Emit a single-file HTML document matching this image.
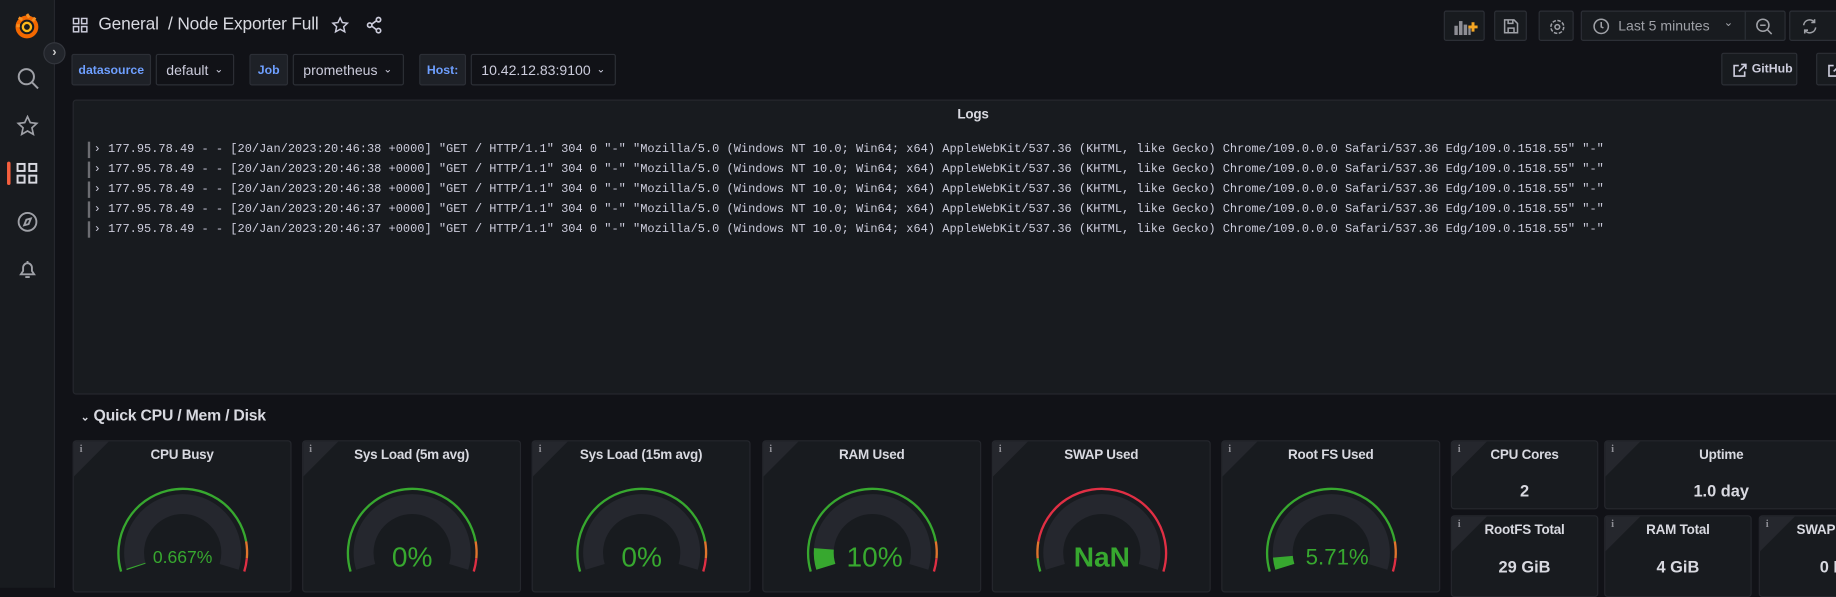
<!DOCTYPE html>
<html><head><meta charset="utf-8"><style>
*{box-sizing:border-box;margin:0;padding:0}
html,body{width:1836px;height:587px;overflow:hidden;background:#111217}
#w{position:absolute;left:0;top:0;width:1568px;height:502px;transform:scale(1.17092);transform-origin:0 0;font-family:"Liberation Sans",sans-serif;color:#ccccdc}
.a{position:absolute}
.side{left:0;top:0;width:47px;height:502px;background:#181b1f;border-right:1px solid #25272d}
.btn{position:absolute;background:#181b1f;border:1px solid #2c2f36;border-radius:2px}
.lbl{position:absolute;background:#1e2127;border:1px solid #2c2f36;border-radius:2px;color:#6e9fff;font-size:10.5px;font-weight:bold;display:flex;align-items:center;justify-content:center;height:27px;top:46px}
.dd{position:absolute;background:#111217;border:1px solid #2c2f36;border-radius:2px;color:#ccccdc;font-size:12px;display:flex;align-items:center;padding-left:8px;height:27px;top:46px}
.panel{position:absolute;background:#181b1f;border:1px solid #25272d;border-radius:3px;overflow:hidden}
.ttl{position:absolute;left:0;right:0;top:6px;text-align:center;font-size:11.5px;font-weight:bold;color:#d8d9e0;letter-spacing:-0.2px}
.info{position:absolute;left:0;top:0;width:0;height:0;border-top:30px solid #25272d;border-right:30px solid transparent}
.info:after{content:"i";position:absolute;left:5px;top:-29px;font-size:9px;font-weight:bold;color:#8e8e95;font-family:"Liberation Serif",serif}
.log{position:absolute;left:12px;font-family:"Liberation Mono",monospace;font-size:10.24px;color:#ccccdc;white-space:pre;height:14px;line-height:14px;border-left:2px solid #6c6d72;padding-left:3px}
.sv{position:absolute;left:0;right:0;text-align:center;font-size:14px;font-weight:bold;color:#d8d9e0}
</style></head><body><div id="w">
<div class="a side"></div>
<svg class="a" style="left:12px;top:11px" width="22" height="23" viewBox="0 0 22 23"><circle cx="11" cy="12" r="8" fill="none" stroke="#f46800" stroke-width="3.5"/><circle cx="11" cy="12" r="3.5" fill="none" stroke="#fbb81a" stroke-width="2"/><path d="M11 1l2 3M4 4l3 2M2 11h3M18 4l-2 3" stroke="#f69023" stroke-width="2.5"/></svg>
<div class="a" style="left:37px;top:36px;width:19px;height:19px;border-radius:50%;background:#22252b;border:1px solid #34373e;color:#ccc;font-size:11px;text-align:center;line-height:16px;font-weight:bold">›</div>
<svg class="a" style="left:14px;top:57px" width="20" height="20" viewBox="0 0 20 20" fill="none" stroke="#9fa1a7" stroke-width="1.7"><circle cx="8.5" cy="8.5" r="6.5"/><path d="M13.5 13.5l5 5"/></svg>
<svg class="a" style="left:14px;top:98px" width="19" height="19" viewBox="0 0 24 24" fill="none" stroke="#9fa1a7" stroke-width="1.8"><path d="M12 2l3 6.5 7 .8-5.2 4.8 1.5 7L12 17.5 5.7 21.1l1.5-7L2 9.3l7-.8z"/></svg>
<div class="a" style="left:6px;top:138px;width:3px;height:20px;background:#f55f3e;border-radius:2px"></div>
<svg class="a" style="left:14px;top:139px" width="18" height="18" viewBox="0 0 18 18" fill="none" stroke="#d8d9e0" stroke-width="1.7"><rect x="1" y="1" width="6" height="6"/><rect x="11" y="1" width="6" height="6"/><rect x="1" y="11" width="6" height="6"/><rect x="11" y="11" width="6" height="6"/></svg>
<svg class="a" style="left:14px;top:180px" width="19" height="19" viewBox="0 0 20 20" fill="none" stroke="#9fa1a7" stroke-width="1.7"><circle cx="10" cy="10" r="8"/><path d="M13 7l-2 5-4 1 2-5z"/></svg>
<svg class="a" style="left:15px;top:221px" width="17" height="18" viewBox="0 0 18 19" fill="none" stroke="#9fa1a7" stroke-width="1.7"><path d="M3 14h12l-2-3V8a4 4 0 0 0-8 0v3z M7 16.5h4 M9 2v2"/></svg>
<svg class="a" style="left:62px;top:15px" width="13" height="13" viewBox="0 0 13 13" fill="none" stroke="#ccccdc" stroke-width="1.3"><rect x=".7" y=".7" width="4.5" height="4.5"/><rect x="7.7" y=".7" width="4.5" height="4.5"/><rect x=".7" y="7.7" width="4.5" height="4.5"/><rect x="7.7" y="7.7" width="4.5" height="4.5"/></svg>
<div class="a" style="left:84px;top:13px;font-size:14.8px;letter-spacing:-0.15px;color:#d8d9e0;white-space:nowrap">General &nbsp;/ Node Exporter Full</div>
<svg class="a" style="left:283px;top:14px" width="15" height="15" viewBox="0 0 24 24" fill="none" stroke="#ccccdc" stroke-width="2"><path d="M12 2l3 6.5 7 .8-5.2 4.8 1.5 7L12 17.5 5.7 21.1l1.5-7L2 9.3l7-.8z"/></svg>
<svg class="a" style="left:312px;top:14px" width="15" height="15" viewBox="0 0 16 16" fill="none" stroke="#ccccdc" stroke-width="1.5"><circle cx="12" cy="3" r="2"/><circle cx="4" cy="8" r="2"/><circle cx="12" cy="13" r="2"/><path d="M6 7l4-3M6 9l4 3"/></svg>
<div class="btn" style="left:1233px;top:9px;width:35px;height:26px"><svg style="position:absolute;left:8px;top:6px" width="20" height="14" viewBox="0 0 20 14"><rect x="0" y="6" width="3" height="8" fill="#8e8e95"/><rect x="4" y="2" width="3" height="12" fill="#8e8e95"/><rect x="8" y="5" width="3" height="9" fill="#8e8e95"/><rect x="12" y="8" width="2" height="6" fill="#8e8e95"/><path d="M16 3v8M12 7h8" stroke="#f5a623" stroke-width="2.5"/></svg></div>
<div class="btn" style="left:1276px;top:9px;width:28px;height:26px"><svg style="position:absolute;left:7px;top:6px" width="13" height="13" viewBox="0 0 13 13" fill="none" stroke="#9fa1a7" stroke-width="1.3"><path d="M1 1h8l3 3v8H1z M4 1v3h4V1 M4 12V8h5v4"/></svg></div>
<div class="btn" style="left:1314px;top:9px;width:30px;height:26px"><svg style="position:absolute;left:8px;top:6px" width="14" height="14" viewBox="0 0 14 14" fill="none" stroke="#9fa1a7" stroke-width="1.3"><circle cx="7" cy="7" r="2"/><circle cx="7" cy="7" r="5.5" stroke-dasharray="3 1.3"/></svg></div>
<div class="btn" style="left:1350px;top:9px;width:175px;height:26px"><svg style="position:absolute;left:9px;top:5px" width="15" height="15" viewBox="0 0 16 16" fill="none" stroke="#9fa1a7" stroke-width="1.4"><circle cx="8" cy="8" r="6.5"/><path d="M8 4v4.5l2 1"/></svg><span style="position:absolute;left:31px;top:5px;font-size:12px;color:#9fa1a7">Last 5 minutes</span><span style="position:absolute;left:121px;top:4px;font-size:10px;color:#9fa1a7">⌄</span><div style="position:absolute;left:139px;top:0;width:1px;height:24px;background:#2c2f36"></div><svg style="position:absolute;left:148px;top:5px" width="15" height="15" viewBox="0 0 16 16" fill="none" stroke="#9fa1a7" stroke-width="1.4"><circle cx="7" cy="7" r="5.5"/><path d="M4.5 7h5M11 11l4 4"/></svg></div>
<div class="btn" style="left:1528px;top:9px;width:45px;height:26px"><svg style="position:absolute;left:9px;top:5px" width="15" height="15" viewBox="0 0 16 16" fill="none" stroke="#9fa1a7" stroke-width="1.4"><path d="M2.5 7a5.5 5.5 0 0 1 10-2.5M13.5 9a5.5 5.5 0 0 1-10 2.5M12.5 1.5v3h-3M3.5 14.5v-3h3"/></svg></div>
<div class="lbl" style="left:61px;width:68px">datasource</div>
<div class="dd" style="left:133px;width:67px">default <span style="margin-left:5px;font-size:9px">⌄</span></div>
<div class="lbl" style="left:213px;width:33px">Job</div>
<div class="dd" style="left:250px;width:95px">prometheus <span style="margin-left:5px;font-size:9px">⌄</span></div>
<div class="lbl" style="left:358px;width:40px">Host:</div>
<div class="dd" style="left:402px;width:124px">10.42.12.83:9100 <span style="margin-left:5px;font-size:9px">⌄</span></div>
<div class="btn" style="left:1470px;top:45px;width:65px;height:28px"><svg style="position:absolute;left:9px;top:8px" width="12" height="12" viewBox="0 0 12 12" fill="none" stroke="#ccccdc" stroke-width="1.4"><path d="M5 2H1v9h9V7M7 1h4v4M11 1L5 7"/></svg><span style="position:absolute;left:25px;top:7px;font-size:10.5px;font-weight:bold;color:#ccccdc">GitHub</span></div>
<div class="btn" style="left:1551px;top:45px;width:40px;height:28px"><svg style="position:absolute;left:9px;top:8px" width="12" height="12" viewBox="0 0 12 12" fill="none" stroke="#ccccdc" stroke-width="1.4"><path d="M5 2H1v9h9V7M7 1h4v4M11 1L5 7"/></svg></div>
<div class="panel" style="left:62px;top:85px;width:1520px;height:252px">
<div class="ttl" style="left:0;width:1536px">Logs</div>
<div class="log" style="top:35px">› 177.95.78.49 - - [20/Jan/2023:20:46:38 +0000] "GET / HTTP/1.1" 304 0 "-" "Mozilla/5.0 (Windows NT 10.0; Win64; x64) AppleWebKit/537.36 (KHTML, like Gecko) Chrome/109.0.0.0 Safari/537.36 Edg/109.0.1518.55" "-"</div>
<div class="log" style="top:52px">› 177.95.78.49 - - [20/Jan/2023:20:46:38 +0000] "GET / HTTP/1.1" 304 0 "-" "Mozilla/5.0 (Windows NT 10.0; Win64; x64) AppleWebKit/537.36 (KHTML, like Gecko) Chrome/109.0.0.0 Safari/537.36 Edg/109.0.1518.55" "-"</div>
<div class="log" style="top:69px">› 177.95.78.49 - - [20/Jan/2023:20:46:38 +0000] "GET / HTTP/1.1" 304 0 "-" "Mozilla/5.0 (Windows NT 10.0; Win64; x64) AppleWebKit/537.36 (KHTML, like Gecko) Chrome/109.0.0.0 Safari/537.36 Edg/109.0.1518.55" "-"</div>
<div class="log" style="top:86px">› 177.95.78.49 - - [20/Jan/2023:20:46:37 +0000] "GET / HTTP/1.1" 304 0 "-" "Mozilla/5.0 (Windows NT 10.0; Win64; x64) AppleWebKit/537.36 (KHTML, like Gecko) Chrome/109.0.0.0 Safari/537.36 Edg/109.0.1518.55" "-"</div>
<div class="log" style="top:103px">› 177.95.78.49 - - [20/Jan/2023:20:46:37 +0000] "GET / HTTP/1.1" 304 0 "-" "Mozilla/5.0 (Windows NT 10.0; Win64; x64) AppleWebKit/537.36 (KHTML, like Gecko) Chrome/109.0.0.0 Safari/537.36 Edg/109.0.1518.55" "-"</div>
</div>
<div class="a" style="left:69px;top:347px;font-size:13.5px;font-weight:bold;letter-spacing:-0.2px;color:#d8d9e0;white-space:nowrap"><span style="font-size:9px">⌄</span> Quick CPU / Mem / Disk</div>
<div class="panel" style="left:62px;top:376px;width:187px;height:130px"><div class="info"></div><div class="ttl">CPU Busy</div>
<svg class="a" style="left:0;top:0" width="187" height="130" viewBox="0 0 187 130" fill="none">
<path d="M53.3 107.1 A41.5 41.5 0 1 1 132.7 107.1" stroke="#25272e" stroke-width="17"/>
<path d="M53.3 107.1 A41.5 41.5 0 0 1 53 106.2" stroke="#37a82f" stroke-width="17"/>
<path d="M40.4 111.1 A55 55 0 1 1 147.2 85.4" stroke="#37a82f" stroke-width="2"/><path d="M147.2 85.4 A55 55 0 0 1 147.8 99.8" stroke="#e0752d" stroke-width="2"/><path d="M147.8 99.8 A55 55 0 0 1 145.6 111.1" stroke="#e02f44" stroke-width="2"/>
<text x="93" y="104" text-anchor="middle" fill="#37a82f" font-size="15" font-family="Liberation Sans">0.667%</text></svg></div>
<div class="panel" style="left:258px;top:376px;width:187px;height:130px"><div class="info"></div><div class="ttl">Sys Load (5m avg)</div>
<svg class="a" style="left:0;top:0" width="187" height="130" viewBox="0 0 187 130" fill="none">
<path d="M53.3 107.1 A41.5 41.5 0 1 1 132.7 107.1" stroke="#25272e" stroke-width="17"/>
<path d="M40.4 111.1 A55 55 0 1 1 147.2 85.4" stroke="#37a82f" stroke-width="2"/><path d="M147.2 85.4 A55 55 0 0 1 147.8 99.8" stroke="#e0752d" stroke-width="2"/><path d="M147.8 99.8 A55 55 0 0 1 145.6 111.1" stroke="#e02f44" stroke-width="2"/>
<text x="93" y="107" text-anchor="middle" fill="#37a82f" font-size="24" font-family="Liberation Sans">0%</text></svg></div>
<div class="panel" style="left:454px;top:376px;width:187px;height:130px"><div class="info"></div><div class="ttl">Sys Load (15m avg)</div>
<svg class="a" style="left:0;top:0" width="187" height="130" viewBox="0 0 187 130" fill="none">
<path d="M53.3 107.1 A41.5 41.5 0 1 1 132.7 107.1" stroke="#25272e" stroke-width="17"/>
<path d="M40.4 111.1 A55 55 0 1 1 147.2 85.4" stroke="#37a82f" stroke-width="2"/><path d="M147.2 85.4 A55 55 0 0 1 147.8 99.8" stroke="#e0752d" stroke-width="2"/><path d="M147.8 99.8 A55 55 0 0 1 145.6 111.1" stroke="#e02f44" stroke-width="2"/>
<text x="93" y="107" text-anchor="middle" fill="#37a82f" font-size="24" font-family="Liberation Sans">0%</text></svg></div>
<div class="panel" style="left:651px;top:376px;width:187px;height:130px"><div class="info"></div><div class="ttl">RAM Used</div>
<svg class="a" style="left:0;top:0" width="187" height="130" viewBox="0 0 187 130" fill="none">
<path d="M53.3 107.1 A41.5 41.5 0 1 1 132.7 107.1" stroke="#25272e" stroke-width="17"/>
<path d="M53.3 107.1 A41.5 41.5 0 0 1 51.6 91.8" stroke="#37a82f" stroke-width="17"/>
<path d="M40.4 111.1 A55 55 0 1 1 147.2 85.4" stroke="#37a82f" stroke-width="2"/><path d="M147.2 85.4 A55 55 0 0 1 147.8 99.8" stroke="#e0752d" stroke-width="2"/><path d="M147.8 99.8 A55 55 0 0 1 145.6 111.1" stroke="#e02f44" stroke-width="2"/>
<text x="95" y="107" text-anchor="middle" fill="#37a82f" font-size="24" font-family="Liberation Sans">10%</text></svg></div>
<div class="panel" style="left:847px;top:376px;width:187px;height:130px"><div class="info"></div><div class="ttl">SWAP Used</div>
<svg class="a" style="left:0;top:0" width="187" height="130" viewBox="0 0 187 130" fill="none">
<path d="M53.3 107.1 A41.5 41.5 0 1 1 132.7 107.1" stroke="#25272e" stroke-width="17"/>
<path d="M40.4 111.1 A55 55 0 0 1 38.2 99.8" stroke="#37a82f" stroke-width="2"/><path d="M38.2 99.8 A55 55 0 0 1 38.8 85.4" stroke="#e0752d" stroke-width="2"/><path d="M38.8 85.4 A55 55 0 1 1 145.6 111.1" stroke="#e02f44" stroke-width="2"/>
<text x="93" y="107" text-anchor="middle" fill="#37a82f" font-size="24" font-weight="bold" font-family="Liberation Sans">NaN</text></svg></div>
<div class="panel" style="left:1043px;top:376px;width:187px;height:130px"><div class="info"></div><div class="ttl">Root FS Used</div>
<svg class="a" style="left:0;top:0" width="187" height="130" viewBox="0 0 187 130" fill="none">
<path d="M53.3 107.1 A41.5 41.5 0 1 1 132.7 107.1" stroke="#25272e" stroke-width="17"/>
<path d="M53.3 107.1 A41.5 41.5 0 0 1 51.6 98.5" stroke="#37a82f" stroke-width="17"/>
<path d="M40.4 111.1 A55 55 0 1 1 147.2 85.4" stroke="#37a82f" stroke-width="2"/><path d="M147.2 85.4 A55 55 0 0 1 147.8 99.8" stroke="#e0752d" stroke-width="2"/><path d="M147.8 99.8 A55 55 0 0 1 145.6 111.1" stroke="#e02f44" stroke-width="2"/>
<text x="98" y="105" text-anchor="middle" fill="#37a82f" font-size="19" font-family="Liberation Sans">5.71%</text></svg></div>
<div class="panel" style="left:1239px;top:376px;width:126px;height:59px"><div class="info"></div><div class="ttl">CPU Cores</div><div class="sv" style="top:34px">2</div></div>
<div class="panel" style="left:1370px;top:376px;width:220px;height:59px"><div class="info"></div><div class="ttl" style="width:198px">Uptime</div><div class="sv" style="top:34px;width:198px">1.0 day</div></div>
<div class="panel" style="left:1239px;top:440px;width:126px;height:70px"><div class="info"></div><div class="ttl">RootFS Total</div><div class="sv" style="top:35px">29 GiB</div></div>
<div class="panel" style="left:1370px;top:440px;width:126px;height:70px"><div class="info"></div><div class="ttl">RAM Total</div><div class="sv" style="top:35px">4 GiB</div></div>
<div class="panel" style="left:1502px;top:440px;width:126px;height:70px"><div class="info"></div><div class="ttl">SWAP Total</div><div class="sv" style="top:35px">0 B</div></div>
</div></body></html>
